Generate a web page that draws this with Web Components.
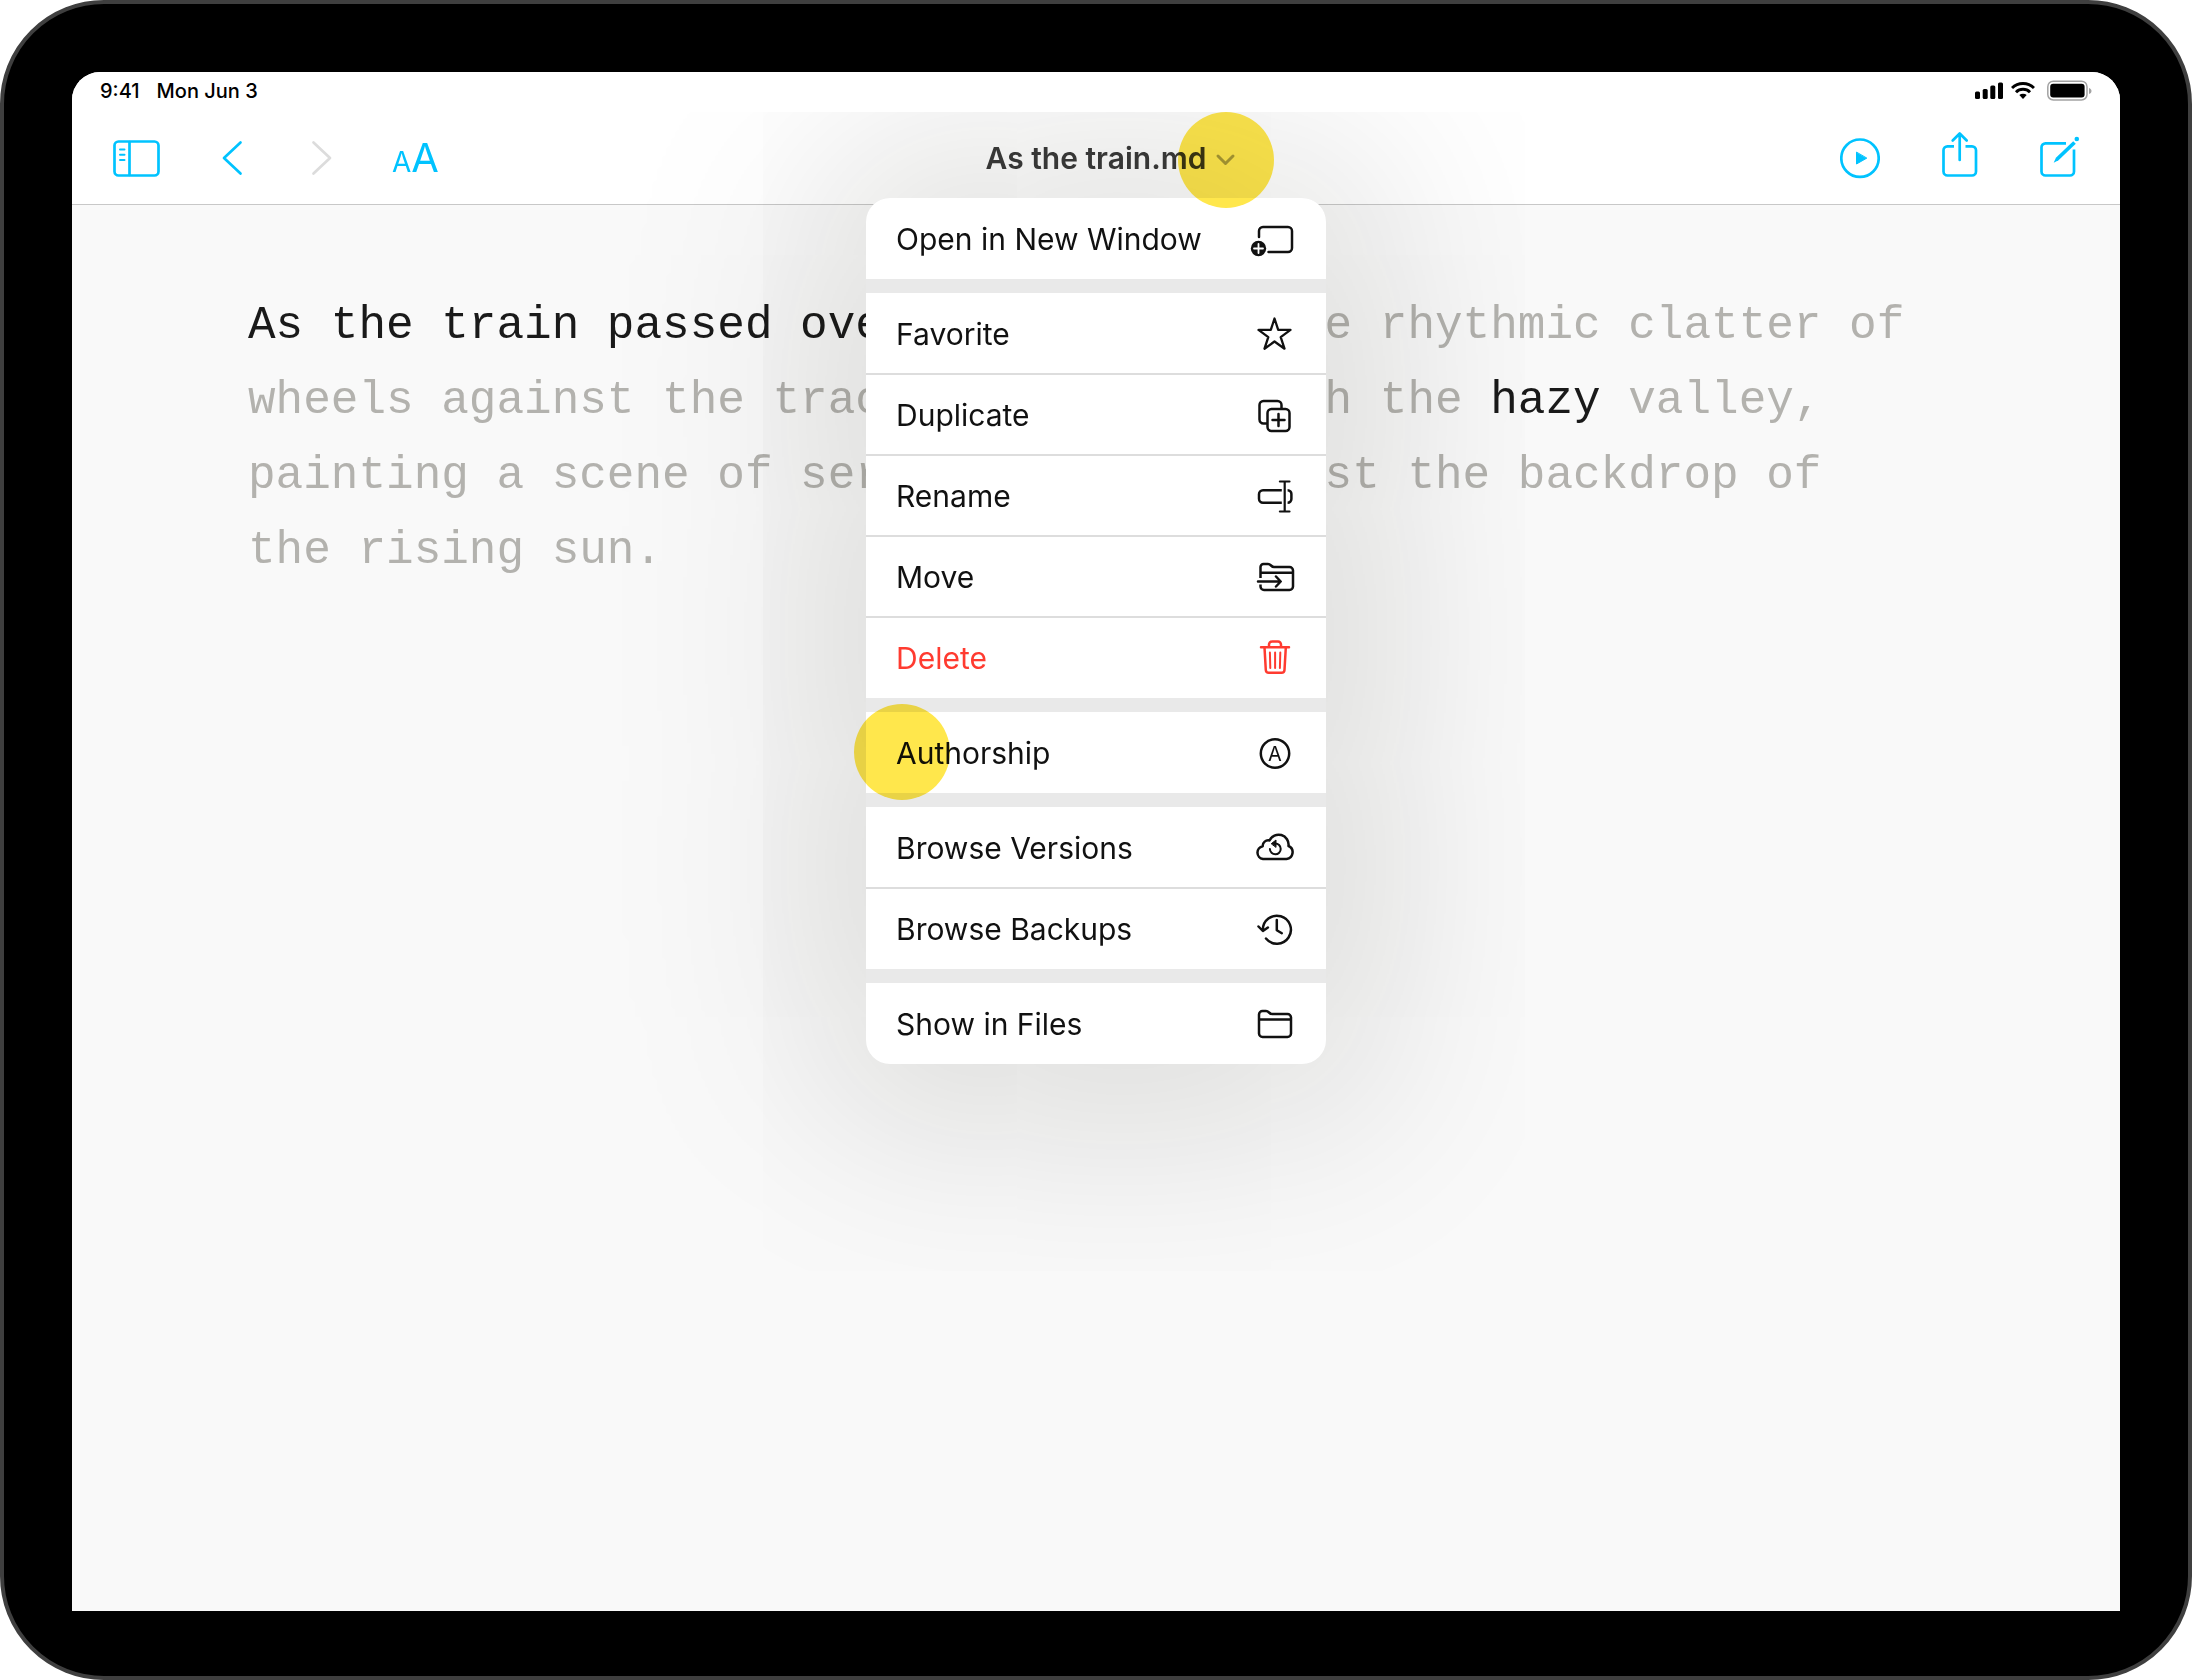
<!DOCTYPE html>
<html lang="en">
<head>
<meta charset="utf-8">
<meta name="viewport" content="width=device-width, initial-scale=1">
<title>As the train.md</title>
<style>
    body {
        margin: 0;
        background-color: #ffffff;
        font-family: Inter, "Liberation Sans", sans-serif;
        --accent: #00c3ff;
        --danger: #ff3b30;
        --muted: #b3b2ae;
    }
</style>
</head>
<body>
    <tablet-frame>
        <status-bar slot="status" time="9:41" date="Mon Jun 3"></status-bar>
        <tool-bar slot="toolbar" heading="As the train.md"></tool-bar>

        <text-editor>
            <mark>As the train passed over the bridge,</mark> the rhythmic clatter of wheels against the tracks echoed through the <mark>hazy</mark> valley, painting a scene of serene beauty against the backdrop of the rising sun.
        </text-editor>

        <document-menu slot="menu">
            <menu-group>
                <menu-item icon="window">Open in New Window</menu-item>
            </menu-group>
            <menu-group>
                <menu-item icon="star">Favorite</menu-item>
                <menu-item icon="duplicate">Duplicate</menu-item>
                <menu-item icon="rename">Rename</menu-item>
                <menu-item icon="move">Move</menu-item>
                <menu-item icon="trash" danger>Delete</menu-item>
            </menu-group>
            <menu-group>
                <menu-item icon="authorship">Authorship</menu-item>
            </menu-group>
            <menu-group>
                <menu-item icon="cloud">Browse Versions</menu-item>
                <menu-item icon="history">Browse Backups</menu-item>
            </menu-group>
            <menu-group>
                <menu-item icon="folder">Show in Files</menu-item>
            </menu-group>
        </document-menu>

        <tap-marker slot="marker" style="--x: 130px; --y: 88px"></tap-marker>
        <tap-marker slot="marker" style="--x: -194px; --y: 680px"></tap-marker>
    </tablet-frame>

<script>
// Icons for the menu rows, all drawn on a 44x44 grid.
const menuIcons = {
    window: `
        <path d="M7 20V14a4 4 0 0 1 4-4H36a4 4 0 0 1 4 4V31a4 4 0 0 1-4 4H16.5"/>
        <circle cx="6.5" cy="31.5" r="7.7" fill="currentColor" stroke="none"/>
        <path d="M2 31.5h9M6.5 27v9" stroke="#fff" stroke-width="1.8"/>`,
    star: `
        <path stroke-width="2.3" d="M22.5 6.5L26.2 17.9H38.5L28.7 25.1L32.5 36.7L22.5 29.5L12.5 36.7L16.3 25.1L6.5 17.9H18.8Z"/>`,
    duplicate: `
        <path d="M29.5 15V12a4 4 0 0 0-4-4H11.5a4 4 0 0 0-4 4v14.5a4 4 0 0 0 4 4h3"/>
        <rect x="15.5" y="16" width="22" height="22" rx="4"/>
        <path d="M26.5 21v12M20.5 27h12"/>`,
    rename: `
        <path stroke-linecap="butt" d="M29.8 16.2H11a4 4 0 0 0-4 4v4.6a4 4 0 0 0 4 4H29.8M35.6 16.2a3.8 3.8 0 0 1 3.8 4v4.6a3.8 3.8 0 0 1-3.8 4"/>
        <path stroke-width="2.2" d="M32.7 7.5v30M27.9 7.5h9.6M27.9 37.5h9.6"/>`,
    move: `
        <path stroke-linecap="butt" d="M8.5 23V12a3 3 0 0 1 3-3h4.5c3 0 3 3 6 3H37.5a3.5 3.5 0 0 1 3.5 3.5V31.5a3.5 3.5 0 0 1-3.5 3.5H12a3.5 3.5 0 0 1-3.5-3.5v-2M8.5 17.8H41"/>
        <path d="M6 26.5H28.5M24 21.5l4.7 5-4.7 5"/>`,
    trash: `
        <path d="M9 11.3H37M17 11V8.5a3 3 0 0 1 3-3h6a3 3 0 0 1 3 3V11M12.5 11.5l1.3 22.5a3 3 0 0 0 3 2.8h12.7a3 3 0 0 0 3-2.8L33.8 11.5"/>
        <path stroke-width="2" d="M17.9 16.5l.4 15.5M23.1 16.5V32M28.3 16.5l-.4 15.5"/>`,
    authorship: `
        <circle cx="23" cy="22.5" r="14.2"/>
        <text x="23" y="29.5" text-anchor="middle" font-size="20" fill="currentColor" stroke="none">A</text>`,
    cloud: `
        <path d="M11 33H34.5A6.8 6.8 0 0 0 36.5 20A10 10 0 0 0 17.5 14.5A5.5 5.5 0 0 0 10.7 20.2A6.5 6.5 0 0 0 11 33Z"/>
        <path stroke-width="2" d="M17.9 23a5.4 5.4 0 1 0 5.4-5.5"/>
        <path fill="currentColor" stroke-width="1" d="M19.5 17.5l4.500-3.500v7z"/>`,
    history: `
        <path d="M14 31.5A14 14 0 1 0 10.9 23M6.5 19.5l4.4 4.5 5-3.5M24.8 13v10.2l5 3"/>`,
    folder: `
        <path d="M7 17.5H39M7 31.5V12.5a3.5 3.5 0 0 1 3.5-3.5h3.5c3 0 3 3 6 3H35.5a3.5 3.5 0 0 1 3.5 3.5V31.5a3.5 3.5 0 0 1-3.5 3.5H10.5a3.5 3.5 0 0 1-3.5-3.5z"/>`
};

// Shared base: every element just renders a template into its shadow root.
class BaseElement extends HTMLElement {
    connectedCallback() {
        if (this.shadowRoot) return;
        const shadowRoot = this.attachShadow({ mode: "open" });
        shadowRoot.innerHTML = this.template();
    }
}

class TabletFrame extends BaseElement {
    template() {
        return `
        <style>
            :host {
                display: flex;
                box-sizing: border-box;
                min-height: 100vh;
                padding: 68px 68px 65px;
                border: 4px solid #3f3f3f;
                border-radius: 104px;
                background-color: #000000;
            }

            .screen {
                position: relative;
                display: flex;
                flex-direction: column;
                flex: 1;
                overflow: hidden;
                border-radius: 28px 28px 0 0;
                background-color: #f9f9f9;
            }

            /* the menu hangs below the title, centered */
            .layer {
                position: absolute;
                inset: 126px 0 auto 0;
                display: flex;
                justify-content: center;
            }
        </style>
        <div class="screen">
            <slot name="status"></slot>
            <slot name="toolbar"></slot>
            <slot></slot>
            <div class="layer"><slot name="menu"></slot></div>
            <slot name="marker"></slot>
        </div>`;
    }
}

class StatusBar extends BaseElement {
    template() {
        return `
        <style>
            :host {
                position: relative;
                z-index: 1;
                display: flex;
                justify-content: space-between;
                align-items: center;
                box-sizing: border-box;
                height: 40px;
                padding: 0 28px 2px;
                background-color: #ffffff;
                color: #000000;
                font-size: 20px;
                font-weight: 500;
                line-height: 24px;
            }

            div {
                display: flex;
                align-items: center;
            }

            .clock {
                gap: 17px;
            }

            .wifi {
                margin: 0 12px 0 8px;
            }
        </style>
        <div class="clock">
            <span>${this.getAttribute("time")}</span>
            <span>${this.getAttribute("date")}</span>
        </div>
        <div>
            <svg width="28" height="20" viewBox="0 0 28 20" role="img" aria-label="Signal">
                <rect x="0" y="10.5" width="5" height="7.5" rx="1.5"/>
                <rect x="7.7" y="8" width="5" height="10" rx="1.5"/>
                <rect x="15.3" y="4.5" width="5" height="13.5" rx="1.5"/>
                <rect x="23" y="1.5" width="5" height="16.5" rx="1.5"/>
            </svg>
            <svg class="wifi" width="24" height="20" viewBox="0 0 24 20" fill="none" stroke="#000" stroke-width="3" role="img" aria-label="Wi-Fi">
                <path d="M1 7a15.8 15.8 0 0 1 22 0M5 11.2a10 10 0 0 1 14 0"/>
                <path fill="#000" stroke="none" d="M8.3 14.1a5.5 5.5 0 0 1 7.4 0L12 17.9z"/>
            </svg>
            <svg width="45" height="22" viewBox="0 0 45 22" role="img" aria-label="Battery">
                <rect x=".8" y="1.2" width="39.2" height="18.8" rx="5.5" fill="none" stroke="#a3a3a3" stroke-width="1.5"/>
                <rect x="3.2" y="3.8" width="34.4" height="13.6" rx="3"/>
                <path d="M42 8v6c1.5-.5 2.5-1.5 2.5-3s-1-2.5-2.5-3z" fill="#a3a3a3"/>
            </svg>
        </div>`;
    }
}

class ToolBar extends BaseElement {
    template() {
        return `
        <style>
            :host {
                display: grid;
                grid-template-columns: 1fr auto 1fr;
                align-items: center;
                height: 92px;
                padding: 0 40px;
                border-bottom: 1px solid #c8c8c8;
                background-color: #ffffff;
            }

            .left, .right {
                display: flex;
                align-items: center;
            }

            .left {
                gap: 56px;
            }

            .right {
                gap: 60px;
                justify-content: flex-end;
            }

            button {
                display: block;
                padding: 0;
                border: none;
                background: none;
                color: var(--accent);
                font: inherit;
                cursor: pointer;
            }

            button:disabled {
                color: #dcdcdc;
            }

            svg {
                display: block;
                fill: none;
                stroke: currentColor;
                stroke-linecap: round;
                stroke-linejoin: round;
            }

            .size {
                padding-top: 4px;
                font-size: 40px;
                line-height: 40px;
            }

            .size small {
                font-size: 28px;
            }

            h1 {
                margin: 0;
                font-size: 30px;
                font-weight: 600;
                line-height: 36px;
            }

            h1 button {
                position: relative;
                color: #3a3a3a;
            }

            /* kept out of the flow so the name itself stays centered */
            h1 svg {
                position: absolute;
                top: 12px;
                left: 100%;
                margin-left: 8px;
                color: #a8a8a8;
            }
        </style>
        <div class="left">
            <button aria-label="Library">
                <svg width="48" height="56" viewBox="0 0 48 56" stroke-width="2.7">
                    <rect x="2.5" y="11.5" width="44" height="34" rx="4"/>
                    <path d="M17.5 12V45"/>
                    <path stroke-width="2" d="M8 19.5h4.5M8 24.7h4.5M8 30h4.5"/>
                </svg>
            </button>
            <button aria-label="Back">
                <svg width="32" height="56" viewBox="0 0 32 56" stroke-width="2.7"><path d="M24.5 12.5L8 28L24.5 43.5"/></svg>
            </button>
            <button aria-label="Forward" disabled>
                <svg width="32" height="56" viewBox="0 0 32 56" stroke-width="2.7"><path d="M9.5 12.5L26 28L9.5 43.5"/></svg>
            </button>
            <button class="size" aria-label="Text size"><small>A</small>A</button>
        </div>
        <h1>
            <button>${this.getAttribute("heading")}
                <svg width="22" height="16" viewBox="0 0 22 16" stroke-width="3"><path d="M4 4L11.5 11.5L19 4"/></svg>
            </button>
        </h1>
        <div class="right">
            <button aria-label="Preview">
                <svg width="40" height="56" viewBox="0 0 40 56" stroke-width="2.7">
                    <circle cx="20" cy="28.2" r="18.7"/>
                    <path fill="currentColor" stroke-width="1" d="M16.5 22.5v11.5l10-5.7z"/>
                </svg>
            </button>
            <button aria-label="Share">
                <svg width="40" height="56" viewBox="0 0 40 56" stroke-width="2.7">
                    <path stroke-linecap="butt" d="M14 16.3H7.5a4 4 0 0 0-4 4V41.5a4 4 0 0 0 4 4H32a4 4 0 0 0 4-4V20.3a4 4 0 0 0-4-4H25.5"/>
                    <path d="M19.7 30V4M12.7 10.5l7-7 7 7"/>
                </svg>
            </button>
            <button aria-label="New sheet">
                <svg width="40" height="56" viewBox="0 0 40 56" stroke-width="2.7">
                    <path stroke-linecap="butt" d="M26 13.3H5.5a4 4 0 0 0-4 4V41.5a4 4 0 0 0 4 4H30a4 4 0 0 0 4-4V19.5"/>
                    <path stroke="none" fill="currentColor" d="M33.2 11.2l2.6 2.6L18.5 30.3l-4.8 2.5 2.2-5z"/>
                    <circle cx="36.8" cy="9" r="2.3" stroke="none" fill="currentColor"/>
                </svg>
            </button>
        </div>`;
    }
}

class TextEditor extends BaseElement {
    template() {
        return `
        <style>
            :host {
                display: block;
                flex: 1;
                padding: 84px 200px 0 176px;
                color: var(--muted);
                font-family: "Liberation Mono", monospace;
                font-size: 46px;
                line-height: 75px;
            }

            p {
                margin: 0;
            }

            ::slotted(mark) {
                background: none;
                color: #1a1a1a;
            }
        </style>
        <p><slot></slot></p>`;
    }
}

class DocumentMenu extends BaseElement {
    template() {
        return `
        <style>
            :host {
                display: flex;
                flex-direction: column;
                gap: 14px;
                width: 460px;
                overflow: hidden;
                border-radius: 24px;
                background-color: #e9e9e9;
                box-shadow: 0 0 220px 40px rgba(20, 20, 0, 0.16);
            }
        </style>
        <slot></slot>`;
    }
}

class MenuGroup extends BaseElement {
    template() {
        return `
        <style>
            :host {
                display: flex;
                flex-direction: column;
                background-color: #ffffff;
            }

            /* the line sits inside the row, so it does not move the label */
            ::slotted(menu-item:not(:last-child)) {
                box-shadow: inset 0 -1px #dddddd, 0 1px #dddddd;
            }
        </style>
        <slot></slot>`;
    }
}

class MenuItem extends BaseElement {
    template() {
        return `
        <style>
            :host {
                display: flex;
                box-sizing: border-box;
                height: 81px;
                color: #111111;
            }

            :host([danger]) {
                color: var(--danger);
            }

            button {
                display: flex;
                justify-content: space-between;
                align-items: center;
                flex: 1;
                padding: 0 30px;
                border: none;
                background: none;
                color: inherit;
                font: inherit;
                font-size: 30px;
                line-height: 36px;
                cursor: pointer;
            }

            svg {
                overflow: visible;
                fill: none;
                stroke: currentColor;
                stroke-linecap: round;
                stroke-linejoin: round;
            }
        </style>
        <button>
            <span><slot></slot></span>
            <svg width="44" height="44" viewBox="0 0 44 44" stroke-width="2.5" aria-hidden="true">${menuIcons[this.getAttribute("icon")]}</svg>
        </button>`;
    }
}

// Yellow dot showing where to tap. --x is measured from the screen's center line.
class TapMarker extends BaseElement {
    template() {
        return `
        <style>
            :host {
                position: absolute;
                top: var(--y);
                left: calc(50% + var(--x));
                width: 96px;
                height: 96px;
                margin: -48px;
                border-radius: 50%;
                background-color: #ffe74c;
                mix-blend-mode: multiply;
                pointer-events: none;
            }
        </style>`;
    }
}

customElements.define("tablet-frame", TabletFrame);
customElements.define("status-bar", StatusBar);
customElements.define("tool-bar", ToolBar);
customElements.define("text-editor", TextEditor);
customElements.define("document-menu", DocumentMenu);
customElements.define("menu-group", MenuGroup);
customElements.define("menu-item", MenuItem);
customElements.define("tap-marker", TapMarker);
</script>
</body>
</html>
